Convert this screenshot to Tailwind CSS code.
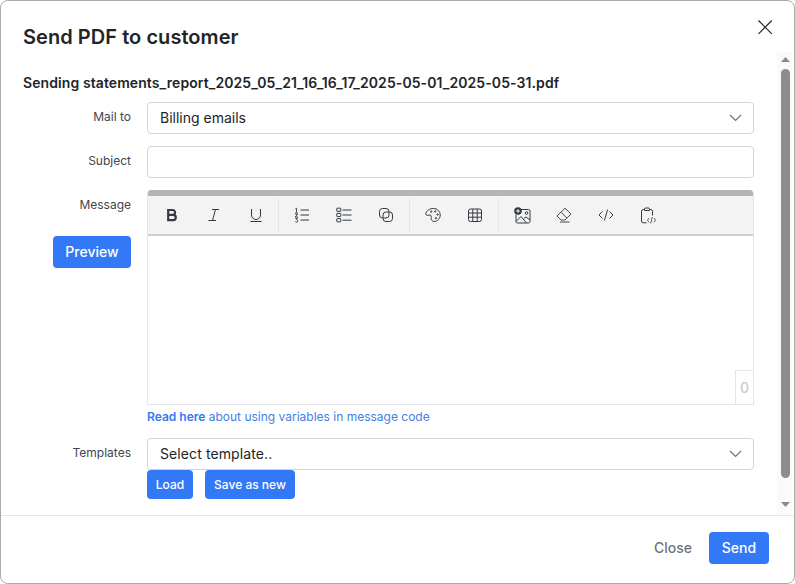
<!DOCTYPE html>
<html>
<head>
<meta charset="utf-8">
<script src="https://cdn.jsdelivr.net/npm/@tailwindcss/browser@4"></script>
</head>
<body class="m-0 bg-white">
<div class="w-[795px] h-[584px] overflow-hidden relative flex flex-col bg-white border border-[#a9a9a9] rounded-lg font-['Inter',sans-serif] text-[#212529]">
  <header class="h-[51px] shrink-0 pl-[22px] pt-[22px] relative">
    <h1 class="text-[20px] leading-[28px] font-semibold tracking-[0.05px]">Send PDF to customer</h1>
    <svg class="absolute left-[756px] top-[18px] w-[16px] h-[16px]" viewBox="0 0 16 16" fill="none" stroke="#212529" stroke-width="1.2"><path d="M1.5 1.5 L14.8 14.8 M14.8 1.5 L1.5 14.8"/></svg>
  </header>
  <div class="flex-1 flex min-h-0">
    <main class="flex-1 pl-[22px] pr-[23px] pt-[21px]">
      <p class="text-[14px] leading-[20px] font-semibold tracking-[0.087px]">Sending statements_report_2025_05_21_16_16_17_2025-05-01_2025-05-31.pdf</p>
      <div class="mt-[9px] flex">
        <label class="w-[108px] text-right text-[12px] leading-[30px] text-[#3f4650]">Mail to</label>
        <div class="ml-[16px] flex-1 h-[32px] border border-[#ced4da] rounded-[4px] flex items-center justify-between pl-[12px] pr-[11px] text-[14px]">
          <span class="pb-[1px]">Billing emails</span>
          <svg class="w-[13px] h-[8px]" viewBox="0 0 13 8" fill="none" stroke="#6c757d" stroke-width="1.2"><path d="M1 1 L6.5 6.5 L12 1"/></svg>
        </div>
      </div>
      <div class="mt-[12px] flex">
        <label class="w-[108px] text-right text-[12px] leading-[30px] text-[#3f4650]">Subject</label>
        <div class="ml-[16px] flex-1 h-[32px] border border-[#ced4da] rounded-[4px]"></div>
      </div>
      <div class="mt-[12px] flex">
        <div class="w-[108px] flex flex-col items-end">
          <label class="text-[12px] leading-[30px] text-[#3f4650]">Message</label>
          <button class="mt-[16px] w-[78px] h-[32px] pb-[1px] bg-[#3379f6] rounded-[4px] text-white text-[14px] font-medium">Preview</button>
        </div>
        <div class="ml-[16px] flex-1">
          <div class="h-[215px] flex flex-col border border-[#e3e5e8] border-t-0 rounded-t-[4px] overflow-hidden">
            <div class="h-[46px] shrink-0 bg-[#f3f3f3] border-t-[6px] border-t-[#b4b4b4] border-b-2 border-b-[#cfcfcf] flex items-center pl-[3px] text-[#3f4650]">
              <div class="flex items-center h-[34px] border-r border-[#e6e6e6] w-[128px]">
                <span class="w-[42px] flex justify-center">
                  <svg class="w-[16px] h-[16px]" viewBox="0 0 16 16" fill="none" stroke="#343a40" stroke-width="2.2"><path d="M4.2 3 H8.6 A2.45 2.45 0 0 1 8.6 7.9 H4.2 M4.2 7.9 H9.2 A2.6 2.6 0 0 1 9.2 13.1 H4.2 M4.2 1.9 V14.2"/></svg>
                </span>
                <span class="w-[42px] flex justify-center">
                  <svg class="w-[16px] h-[16px]" viewBox="0 0 16 16" fill="none" stroke="#343a40" stroke-width="1"><path d="M6 2.5 H13 M9.5 2.5 L6.5 13.5 M2.5 13.5 H10"/></svg>
                </span>
                <span class="w-[42px] flex justify-center">
                  <svg class="w-[16px] h-[16px]" viewBox="0 0 16 16" fill="none" stroke="#343a40" stroke-width="1"><path d="M3.5 2 V8 A4.5 4.5 0 0 0 12.5 8 V2 M2.5 14.5 H13.5"/></svg>
                </span>
              </div>
              <div class="flex items-center h-[34px] border-r border-[#e6e6e6] w-[131px]">
                <span class="w-[46px] flex justify-center">
                  <svg class="w-[16px] h-[16px]" viewBox="0 0 16 16" fill="none" stroke="#343a40" stroke-width="1"><path d="M6.5 3 H15 M6.5 8 H15 M6.5 13 H15"/><path d="M1.3 2 L2.5 1.2 V5.5 M1 6 H4 M1.2 7.3 H3.7 L1.2 10 H4 M1.2 11.3 H3.8 L2.5 12.7 A1.3 1.3 0 1 1 1.2 14.5" stroke-width=".9"/></svg>
                </span>
                <span class="w-[38px] flex justify-center">
                  <svg class="w-[16px] h-[16px]" viewBox="0 0 16 16" fill="none" stroke="#343a40" stroke-width="1"><rect x=".8" y="1.2" width="4" height="3.2" rx=".4"/><rect x=".8" y="6.4" width="4" height="3.2" rx=".4"/><rect x=".8" y="11.6" width="4" height="3.2" rx=".4"/><path d="M6.5 3 H15.5 M6.5 8 H15.5 M6.5 13.2 H15.5"/></svg>
                </span>
                <span class="w-[46px] flex justify-center">
                  <svg class="w-[16px] h-[16px]" viewBox="0 0 16 16" fill="none" stroke="#343a40" stroke-width="1"><rect x="1.5" y="1.5" width="9.5" height="9.5" rx="3"/><rect x="5" y="5" width="9.5" height="9.5" rx="3"/></svg>
                </span>
              </div>
              <div class="flex items-center h-[34px] border-r border-[#e6e6e6] w-[89px]">
                <span class="w-[46px] flex justify-center">
                  <svg class="w-[16px] h-[16px]" viewBox="0 0 16 16" fill="none" stroke="#343a40" stroke-width="1"><path d="M8.5 1.5 C4.5 1.5 1 3.8 .8 6.8 C.7 8.2 2.5 8.6 3.8 8.2 C5.6 7.7 6.8 8.7 6.2 10.3 C5.6 12 6.8 14.5 9.3 14.5 C12.6 14.5 15.2 11.6 15.2 8 C15.2 4.4 12.3 1.5 8.5 1.5 Z"/><circle cx="6.2" cy="4.6" r=".7"/><circle cx="10.3" cy="4.4" r=".7"/><circle cx="12.6" cy="7.5" r=".7"/><circle cx="11" cy="11.3" r=".7"/></svg>
                </span>
                <span class="w-[38px] flex justify-center">
                  <svg class="w-[16px] h-[16px]" viewBox="0 0 16 16" fill="none" stroke="#343a40" stroke-width="1"><rect x="1.5" y="2" width="13" height="12.5" rx="2"/><path d="M1.5 6 H14.5 M1.5 10.2 H14.5 M5.8 2 V14.5 M10.2 2 V14.5"/></svg>
                </span>
              </div>
              <div class="flex items-center h-[34px]">
                <span class="w-[46px] flex justify-center">
                  <svg class="w-[17px] h-[17px]" viewBox="0 0 17 17" fill="none" stroke="#343a40" stroke-width="1"><path d="M6 2.5 H14.5 A1.5 1.5 0 0 1 16 4 V14.5 A1.5 1.5 0 0 1 14.5 16 H3.5 A1.5 1.5 0 0 1 2 14.5 V7.5"/><path d="M2 14.5 L7 9.5 L12.5 16 M10 11.5 L12 10 L16 13"/><circle cx="12.5" cy="6" r="1.3"/><circle cx="4" cy="4" r="3.8" fill="#343a40" stroke="none"/><path d="M4 2.2 V5.8 M2.2 4 H5.8" stroke="#fff"/></svg>
                </span>
                <span class="w-[38px] flex justify-center">
                  <svg class="w-[16px] h-[16px]" viewBox="0 0 16 16" fill="none" stroke="#343a40" stroke-width=".9"><path d="M1 9 L9 1.2 L15 7 L9 13 H5 Z M5.2 5.3 L10.8 11 M4 15 H13.5"/></svg>
                </span>
                <span class="w-[46px] flex justify-center">
                  <svg class="w-[16px] h-[16px]" viewBox="0 0 16 16" fill="none" stroke="#343a40" stroke-width="1"><path d="M4.5 4.5 L1 8 L4.5 11.5 M11.5 4.5 L15 8 L11.5 11.5 M9.6 2.5 L6.4 13.5"/></svg>
                </span>
                <span class="w-[38px] flex justify-center">
                  <svg class="w-[17px] h-[17px]" viewBox="0 0 17 17" fill="none" stroke="#343a40" stroke-width="1"><path d="M4.5 2.5 H3.3 A1.8 1.8 0 0 0 1.5 4.3 V14 A1.8 1.8 0 0 0 3.3 15.8 H6.5 M9.5 2.5 H10.7 A1.8 1.8 0 0 1 12.5 4.3 V8.5"/><path d="M4.5 3.5 V2 A1 1 0 0 1 5.5 1 H8.5 A1 1 0 0 1 9.5 2 V3.5 Z"/><path d="M9 11 L7.5 13.2 L9 15.4 M14 11 L15.5 13.2 L14 15.4 M12.3 10 L10.7 16.4" stroke-width=".8"/></svg>
                </span>
              </div>
            </div>
            <div class="flex-1 relative">
              <span class="absolute right-0 bottom-0 w-[18px] h-[34px] border-l border-t border-[#e3e5e8] text-[14px] font-medium leading-[33px] text-center text-[#c9cccf]">0</span>
            </div>
          </div>
          <p class="mt-[3px] text-[12px] leading-[18px] text-[#3f80e8]"><b class="font-semibold text-[#3379f6]">Read here</b> about using variables in message code</p>
        </div>
      </div>
      <div class="mt-[12px] flex">
        <label class="w-[108px] text-right text-[12px] leading-[30px] text-[#3f4650]">Templates</label>
        <div class="ml-[16px] flex-1">
          <div class="h-[32px] border border-[#ced4da] rounded-[4px] flex items-center justify-between pl-[12px] pr-[11px] text-[14px]">
            <span class="pb-[1px] tracking-[0.1px]">Select template..</span>
            <svg class="w-[13px] h-[8px]" viewBox="0 0 13 8" fill="none" stroke="#6c757d" stroke-width="1.2"><path d="M1 1 L6.5 6.5 L12 1"/></svg>
          </div>
          <div class="flex gap-[12px]">
            <button class="w-[46px] h-[29px] bg-[#3379f6] rounded-[4px] text-white text-[12px] font-medium">Load</button>
            <button class="w-[90px] h-[29px] bg-[#3379f6] rounded-[4px] text-white text-[12px] font-medium">Save as new</button>
          </div>
        </div>
      </div>
    </main>
    <div class="w-[15px] mr-[2px] bg-[#fafafa] relative">
      <svg class="absolute top-[5px] left-[4px] w-[9px] h-[5px]" viewBox="0 0 9 5"><path d="M4.5 0 L9 5 H0 Z" fill="#8a8a8a"/></svg>
      <div class="absolute top-[17px] left-[4px] w-[9px] h-[409px] rounded-full bg-[#8c8c8c]"></div>
      <svg class="absolute bottom-[8px] left-[4px] w-[9px] h-[5px]" viewBox="0 0 9 5"><path d="M4.5 5 L9 0 H0 Z" fill="#8a8a8a"/></svg>
    </div>
  </div>
  <footer class="h-[68px] shrink-0 border-t border-[#e3e5e8] flex items-center justify-end pr-[25px] gap-[17px] pb-[4px]">
    <button class="text-[14px] font-medium text-[#6c757d]">Close</button>
    <button class="w-[60px] h-[32px] bg-[#3379f6] rounded-[4px] text-white text-[14px] font-medium">Send</button>
  </footer>
</div>
</body>
</html>
